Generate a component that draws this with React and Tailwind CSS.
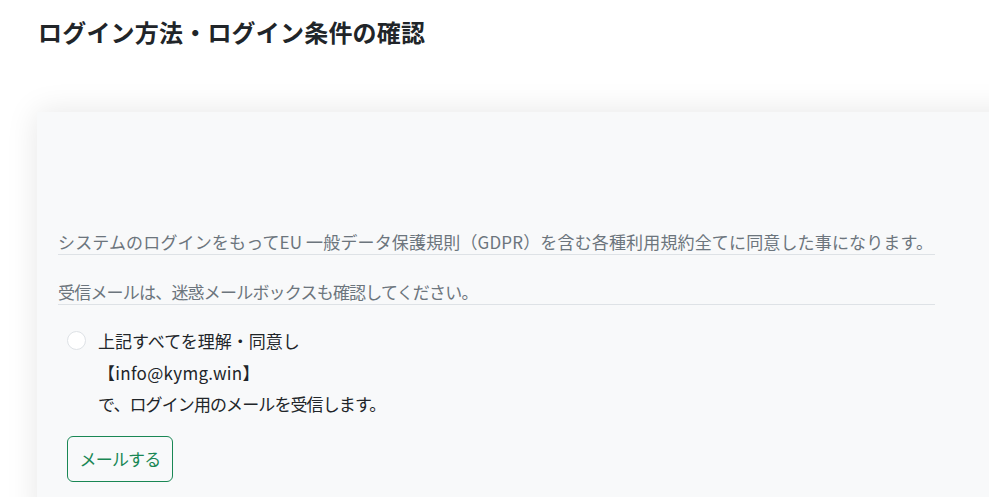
export default function App() {
  return (
    <div
      className="w-[989px] h-[497px] overflow-hidden bg-white text-[#212529]"
      style={{ fontFamily: '"Noto Sans CJK JP", "Noto Sans", sans-serif' }}
    >
      {/* Title */}
      <h1 className="pt-[14px] pl-[38px] text-[24px] font-bold leading-[36px] tracking-[0.2px]">
        ログイン方法・ログイン条件の確認
      </h1>

      {/* Card */}
      <div className="mt-[62px] ml-[37px] w-[1000px] bg-[#f8f9fa] pl-[21px] pt-[118px] pb-[40px] shadow-[0_0_30px_rgba(0,0,0,0.1)]">
        <p className="w-[877px] border-b border-[#dee2e6] text-[17px] leading-[24px] text-[#6c757d] tracking-[0.15px]">
          システムのログインをもってEU 一般データ保護規則（GDPR）を含む各種利用規約全てに同意した事になります。
        </p>
        <p className="mt-[25px] w-[877px] border-b border-[#dee2e6] text-[17px] leading-[24px] text-[#6c757d] tracking-[-0.8px]">
          受信メールは、迷惑メールボックスも確認してください。
        </p>

        <label className="mt-[20px] ml-[9px] flex items-start gap-[12px] text-[17px] leading-[31.5px]">
          <span className="mt-[6px] h-[19px] w-[19px] shrink-0 rounded-full border border-[#dee2e6] bg-white" />
          <span className="flex flex-col">
            <span>上記すべてを理解・同意し</span>
            <span className="tracking-[0.3px]">【info@kymg.win】</span>
            <span className="tracking-[-0.9px]">で、ログイン用のメールを受信します。</span>
          </span>
        </label>

        <button className="mt-[16px] ml-[9px] flex h-[46px] w-[106px] items-center justify-center rounded-[6px] border border-[#198754] text-[17px] text-[#198754] tracking-[-0.8px]">
          メールする
        </button>
      </div>
    </div>
  );
}
